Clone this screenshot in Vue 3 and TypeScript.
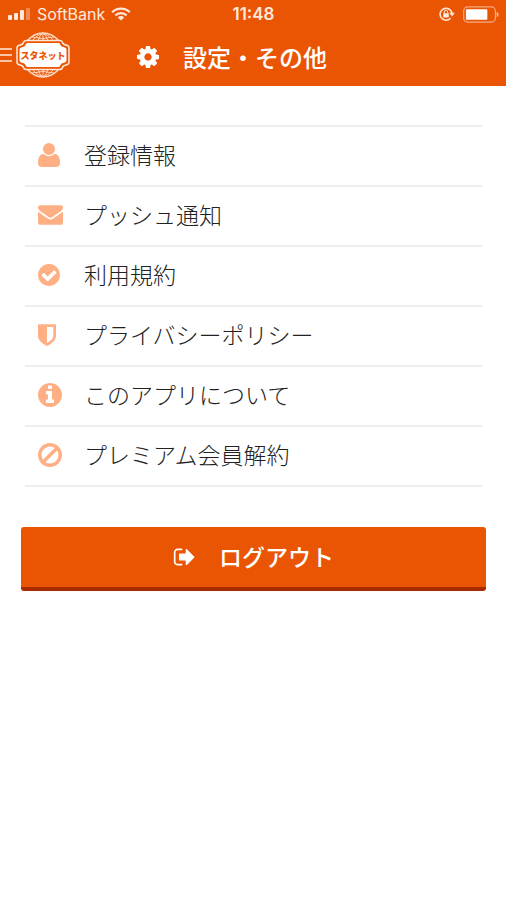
<script setup lang="ts">
interface MenuItem {
  label: string
  icon: string
  viewBox: string
  path: string
  flipped?: boolean
}

const items: MenuItem[] = [
  {
    label: '登録情報',
    icon: 'user',
    viewBox: '0 0 1408 1536',
    flipped: true,
    path: 'M1408 131q0 -120 -73 -189.5t-194 -69.5h-874q-121 0 -194 69.5t-73 189.5q0 53 3.5 103.5t14 109t26.5 108.5t43 97.5t62 81t85.5 53.5t111.5 20q9 0 42 -21.5t74.5 -48t108 -48t133.5 -21.5t133.5 21.5t108 48t74.5 48t42 21.5q61 0 111.5 -20t85.5 -53.5t62 -81t43 -97.5t26.5 -108.5t14 -109t3.5 -103.5zM1088 1024q0 -159 -112.5 -271.5t-271.5 -112.5t-271.5 112.5t-112.5 271.5t112.5 271.5t271.5 112.5t271.5 -112.5t112.5 -271.5z',
  },
  {
    label: 'プッシュ通知',
    icon: 'mail',
    viewBox: '0 256 1792 1408',
    path: 'M1792 710v794q0 66-47 113t-113 47h-1472q-66 0-113-47t-47-113v-794q44 49 101 87 362 246 497 345 57 42 92.5 65.5t94.5 48 110 24.5h2q51 0 110-24.5t94.5-48 92.5-65.5q170-123 498-345 57-39 100-87zm0-294q0 79-49 151t-122 123q-376 261-468 325-10 7-42.5 31t-54 38.5-52 32.5-57.5 27-50 9h-2q-23 0-50-9t-57.5-27-52-32.5-54-38.5-42.5-31q-91-64-262-182.5t-205-142.5q-62-42-117-115.5t-55-136.5q0-78 41.5-130t118.5-52h1472q65 0 112.5 47t47.5 113z',
  },
  {
    label: '利用規約',
    icon: 'check',
    viewBox: '128 128 1536 1536',
    path: 'M1412 734q0-28-18-46l-91-90q-19-19-45-19t-45 19l-408 407-226-226q-19-19-45-19t-45 19l-91 90q-18 18-18 46 0 27 18 45l362 362q19 19 45 19 27 0 46-19l543-543q18-18 18-45zm252 162q0 209-103 385.5t-279.5 279.5-385.5 103-385.5-103-279.5-279.5-103-385.5 103-385.5 279.5-279.5 385.5-103 385.5 103 279.5 279.5 103 385.5z',
  },
  {
    label: 'プライバシーポリシー',
    icon: 'shield',
    viewBox: '256 128 1280 1536',
    path: 'M1344 960v-640h-448v1137q119-63 213-137 235-184 235-360zm192-768v768q0 86-33.5 170.5t-83 150-118 127.5-126.5 103-121 77.5-89.5 49.5-42.5 20q-12 6-26 6t-26-6q-16-7-42.5-20t-89.5-49.5-121-77.5-126.5-103-118-127.5-83-150-33.5-170.5v-768q0-26 19-45t45-19h1152q26 0 45 19t19 45z',
  },
  {
    label: 'このアプリについて',
    icon: 'info',
    viewBox: '128 128 1536 1536',
    path: 'M1152 1376v-160q0-14-9-23t-23-9h-96v-512q0-14-9-23t-23-9h-320q-14 0-23 9t-9 23v160q0 14 9 23t23 9h96v320h-96q-14 0-23 9t-9 23v160q0 14 9 23t23 9h448q14 0 23-9t9-23zm-128-896v-160q0-14-9-23t-23-9h-192q-14 0-23 9t-9 23v160q0 14 9 23t23 9h192q14 0 23-9t9-23zm640 416q0 209-103 385.5t-279.5 279.5-385.5 103-385.5-103-279.5-279.5-103-385.5 103-385.5 279.5-279.5 385.5-103 385.5 103 279.5 279.5 103 385.5z',
  },
  {
    label: 'プレミアム会員解約',
    icon: 'ban',
    viewBox: '128 122 1536 1542',
    path: 'M1440 893q0-161-87-295l-754 753q137 89 297 89 111 0 211.5-43.5t173.5-116.5 116-174.5 43-212.5zm-999 299l755-754q-135-91-300-91-148 0-273 73t-198 199-73 274q0 162 89 299zm1223-299q0 157-61 300t-163.5 246-245 164-298.5 61-298.5-61-245-164-163.5-246-61-300 61-299.5 163.5-245.5 245-164 298.5-61 298.5 61 245 164 163.5 245.5 61 299.5z',
  },
]
</script>

<template>
  <div class="screen">
    <header class="top">
      <div class="status">
        <div class="carrier">
          <svg class="signal" viewBox="0 0 23 12" aria-hidden="true">
            <rect x="0" y="7" width="4" height="5" rx="1" />
            <rect x="6" y="5" width="4" height="7" rx="1" />
            <rect x="12" y="2" width="4" height="10" rx="1" />
            <rect x="18" y="0" width="4" height="12" rx="1" opacity=".35" />
          </svg>
          <span>SoftBank</span>
          <svg class="wifi" viewBox="0 0 20 14" aria-hidden="true">
            <path d="M1.2 5.2a12.6 12.6 0 0 1 17.6 0M4.4 8.4a8 8 0 0 1 11.2 0" fill="none" stroke="currentColor" stroke-width="2.3" />
            <path d="M10 13.6 6.8 10.4a4.6 4.6 0 0 1 6.4 0z" />
          </svg>
        </div>
        <time class="clock">11:48</time>
        <div class="power">
          <svg class="lock" viewBox="0 0 16 14" aria-hidden="true">
            <path d="M11.6 11.2A6 6 0 1 1 13 6.2" fill="none" stroke="currentColor" stroke-width="1.5" />
            <path d="M10.2 5.8h5.6L13 9.4z" />
            <rect x="4.2" y="6.2" width="5.6" height="4.2" rx=".6" />
            <path d="M5.3 6.4V5a1.7 1.7 0 0 1 3.4 0v1.4" fill="none" stroke="currentColor" stroke-width="1" />
          </svg>
          <svg class="battery" viewBox="0 0 37 17" aria-hidden="true">
            <rect x=".7" y=".7" width="32.6" height="15.6" rx="4" fill="none" stroke="currentColor" stroke-width="1.2" opacity=".5" />
            <rect x="3" y="3" width="22" height="11" rx="1" />
            <path d="M34.6 5.6q2 .8 2 2.9t-2 2.9z" opacity=".6" />
          </svg>
        </div>
      </div>
      <div class="bar">
        <div class="brand">
          <button class="menu" type="button" aria-label="メニュー">
            <svg viewBox="0 0 12 14" aria-hidden="true">
              <path d="M0 1h12M0 7h12M0 13h12" stroke="currentColor" stroke-width="1.6" />
            </svg>
          </button>
          <svg class="logo" viewBox="0 0 56 46" role="img" aria-label="スタネット">
            <g class="globe">
              <path d="M12 9Q19 1 28 1t16 8M12 37q7 8 16 8t16-8" stroke-width="1.5" />
              <path d="M28 1v8M28 37v8M23 9q1-5 5-8 4 3 5 8M23 37q1 5 5 8 4-3 5-8M17 9Q20 4 28 1q8 3 11 8M17 37q3 5 11 8 8-3 11-8M17 5q11 3 22 0M17 41q11-3 22 0" />
            </g>
            <path class="plate" d="M11 8.5h34q2 0 2.5 2 .5 2 3.500 2.500 3 .5 3 3V30q0 2.500-3 3-3 .5-3.500 2.500-.5 2-2.500 2H11q-2 0-2.500-2Q8 33.500 5 33q-3-.5-3-3V16q0-2.500 3-3 3-.5 3.500-2.500.5-2 2.500-2z" />
            <path d="M12.500 11h31q1.500 0 2 2 .5 2 3.500 2.300 2.500.4 2.500 2.200v11q0 1.800-2.500 2.200-3 .3-3.500 2.300-.5 2-2 2h-31q-1.500 0-2-2-.5-2-3.500-2.300-2.500-.4-2.500-2.200v-11q0-1.800 2.500-2.200 3-.3 3.500-2.300.5-2 2-2z" />
            <text x="28" y="27" text-anchor="middle">スタネット</text>
          </svg>
        </div>
        <h1 class="title">
          <svg class="cog" viewBox="128 128 1536 1536" aria-hidden="true">
            <path d="M1152 896q0-106-75-181t-181-75-181 75-75 181 75 181 181 75 181-75 75-181zm512-109v222q0 12-8 23t-20 13l-185 28q-19 54-39 91 35 50 107 138 10 12 10 25t-9 23q-27 37-99 108t-94 71q-12 0-26-9l-138-108q-44 23-91 38-16 136-29 186-7 28-36 28h-222q-14 0-24.5-8.5t-11.5-21.5l-28-184q-49-16-90-37l-141 107q-10 9-25 9-14 0-25-11-126-114-165-168-7-10-7-23 0-12 8-23 15-21 51-66.5t54-70.5q-27-50-41-99l-183-27q-13-2-21-12.5t-8-23.5v-222q0-12 8-23t19-13l186-28q14-46 39-92-40-57-107-138-10-12-10-24 0-10 9-23 26-36 98.5-107.5t94.5-71.5q13 0 26 10l138 107q44-23 91-38 16-136 29-186 7-28 36-28h222q14 0 24.5 8.5t11.5 21.5l28 184q49 16 90 37l142-107q9-9 24-9 13 0 25 10 129 119 165 170 7 8 7 22 0 12-8 23-15 21-51 66.5t-54 70.5q26 50 41 98l183 28q13 2 21 12.5t8 23.5z" />
          </svg>
          <span>設定・その他</span>
        </h1>
      </div>
    </header>

    <main>
      <ul class="list">
        <li v-for="item in items" :key="item.icon">
          <a class="row" href="#">
            <span class="slot">
              <svg :class="['icon', item.icon]" :viewBox="item.viewBox" aria-hidden="true">
                <path :d="item.path" :transform="item.flipped ? 'translate(0 1408) scale(1 -1)' : undefined" />
              </svg>
            </span>
            <span class="label">{{ item.label }}</span>
          </a>
        </li>
      </ul>
      <button class="logout" type="button">
        <svg viewBox="0 256 1664 1280" aria-hidden="true">
          <path d="M704 1440q0 4 1 20t.5 26.5-3 23.5-10 19.5-20.5 6.5h-320q-119 0-203.5-84.5t-84.5-203.5v-704q0-119 84.5-203.5t203.5-84.5h320q13 0 22.5 9.5t9.5 22.5q0 4 1 20t.5 26.5-3 23.5-10 19.5-20.5 6.5h-320q-66 0-113 47t-47 113v704q0 66 47 113t113 47h312l11.5 1 11.5 3 8 5.5 7 9 2 13.5zm928-544q0 26-19 45l-544 544q-19 19-45 19t-45-19-19-45v-288h-448q-26 0-45-19t-19-45v-384q0-26 19-45t45-19h448v-288q0-26 19-45t45-19 45 19 19 45l544 544q19 19 19 45z" />
        </svg>
        <span class="label">ログアウト</span>
      </button>
    </main>
  </div>
</template>

<style>
body {
  background: #fff;
}
</style>

<style scoped>
.screen {
  font-family: "Noto Sans CJK JP", sans-serif;
  color: #222;
}
svg {
  display: block;
  flex: none;
  fill: currentColor;
}
.top {
  background: #ea5504;
  color: #fff;
  padding-bottom: 4px;
}
.status {
  display: grid;
  grid-template-columns: 1fr auto 1fr;
  align-items: center;
  height: 28px;
  padding: 0 7px 0 8px;
  font-family: Inter, sans-serif;
  font-size: 16px;
  line-height: 28px;
  color: #ffe9dc;
}
.carrier,
.power {
  display: flex;
  align-items: center;
  gap: 8px;
}
.carrier {
  gap: 6px;
}
.power {
  justify-content: flex-end;
}
.signal {
  width: 23px;
  height: 12px;
}
.wifi {
  width: 20px;
  height: 14px;
}
.clock {
  font-size: 17px;
  font-weight: 600;
}
.lock {
  width: 16px;
  height: 14px;
}
.battery {
  width: 36px;
  height: 17px;
  color: #fff;
}
.bar {
  display: grid;
  grid-template-columns: 1fr auto 1fr;
  align-items: center;
  height: 54px;
}
.brand {
  display: flex;
  align-items: center;
  gap: 3px;
}
.menu {
  border: 0;
  padding: 0;
  background: none;
  color: #ffe9dc;
}
.menu svg {
  width: 12px;
  height: 14px;
}
.logo {
  width: 56px;
  height: 46px;
}
.globe {
  fill: none;
  stroke: #ffd9c4;
  stroke-width: 1;
}
.plate {
  fill: #ea5504;
  stroke: #ffe9dc;
  stroke-width: 1.5;
}
.logo text {
  fill: #ea5504;
  font-size: 9px;
  font-weight: 900;
}
.title {
  display: flex;
  align-items: center;
  gap: 24px;
  margin: 0;
  padding: 4px 42px 0 0;
  font-size: 24px;
  font-weight: 500;
  line-height: 32px;
}
.cog {
  width: 22px;
  height: 22px;
}
main {
  padding: 39px 20px 39px 21px;
}
.list {
  margin: 0 4px;
  padding: 0;
  list-style: none;
  border-top: 2px solid #eee;
}
.row {
  display: flex;
  align-items: center;
  gap: 19px;
  height: 56px;
  padding: 0 0 2px 13px;
  border-bottom: 2px solid #eee;
  color: #222;
  font-size: 23px;
  font-weight: 300;
  line-height: 32px;
  text-decoration: none;
}
.label {
  padding-bottom: 2px;
}
.slot {
  width: 27px;
}
.icon {
  color: #ffaf84;
  width: 22px;
  height: 22px;
}
.user {
  height: 24px;
}
.mail {
  width: 25px;
  height: 20px;
}
.shield {
  width: 18px;
}
.info,
.ban {
  width: 24px;
  height: 24px;
}
.logout {
  display: flex;
  align-items: center;
  justify-content: center;
  gap: 24px;
  width: 100%;
  height: 64px;
  margin-top: 40px;
  padding: 0;
  border: 0;
  border-bottom: 4px solid #a82c00;
  border-radius: 3px;
  background: #ea5504;
  color: #fff;
  font-family: inherit;
  font-size: 23px;
  font-weight: 500;
  line-height: 32px;
}
.logout svg {
  width: 22px;
  height: 18px;
}
</style>
